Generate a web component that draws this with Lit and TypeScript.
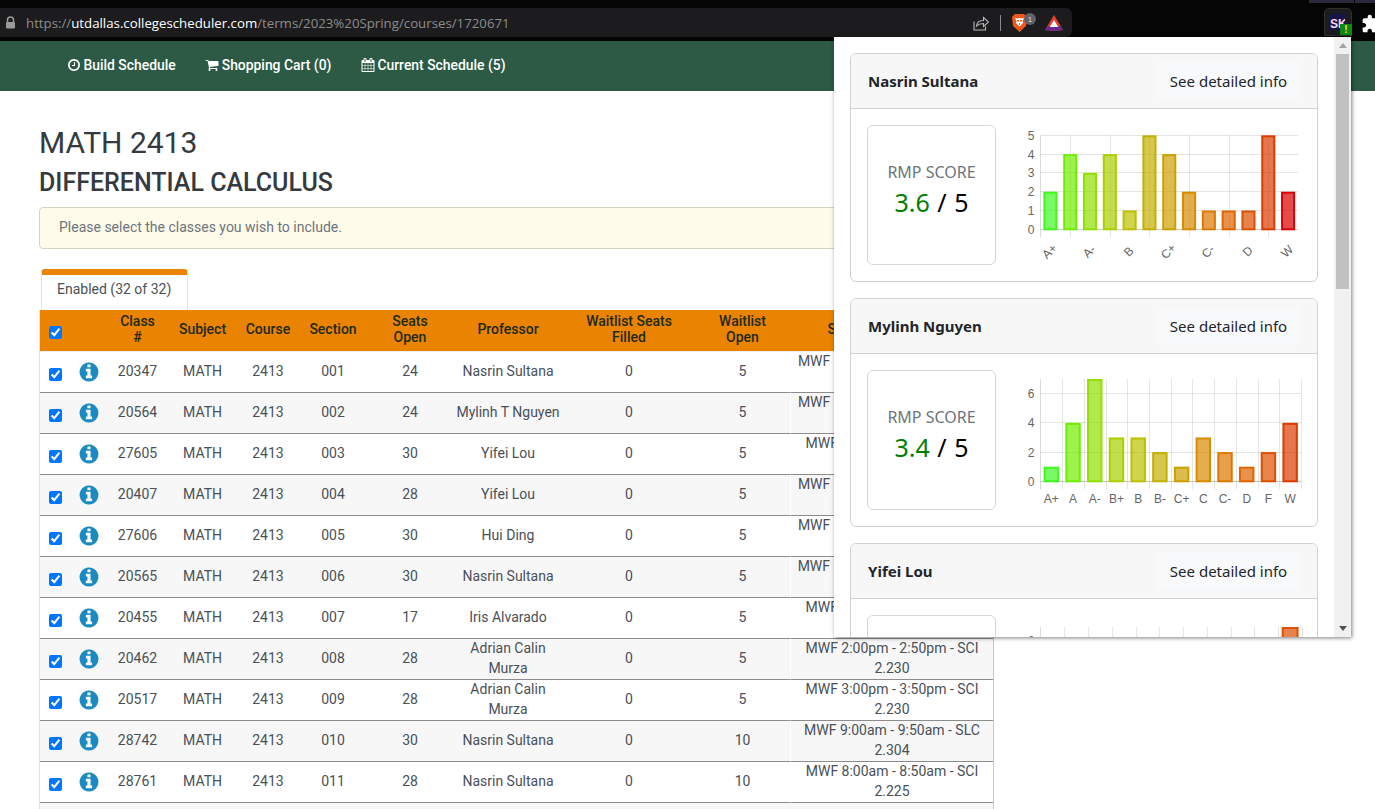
import { LitElement, html, css, svg } from "lit";
import { customElement } from "lit/decorators.js";

const CLOCK = "M1024 544v448q0 14-9 23t-23 9h-320q-14 0-23-9t-9-23v-64q0-14 9-23t23-9h224v-352q0-14 9-23t23-9h64q14 0 23 9t9 23zm416 352q0-148-73-273t-198-198-273-73-273 73-198 198-73 273 73 273 198 198 273 73 273-73 198-198 73-273zm224 0q0 209-103 385.5t-279.5 279.5-385.5 103-385.5-103-279.5-279.5-103-385.5 103-385.5 279.5-279.5 385.5-103 385.5 103 279.5 279.5 103 385.5z";
const CART = "M704 1536q0 52-38 90t-90 38-90-38-38-90 38-90 90-38 90 38 38 90zm896 0q0 52-38 90t-90 38-90-38-38-90 38-90 90-38 90 38 38 90zm128-1088v512q0 24-16.5 42.5t-40.5 21.5l-1044 122q13 60 13 70 0 16-24 64h920q26 0 45 19t19 45-19 45-45 19h-1024q-26 0-45-19t-19-45q0-11 8-31.5t16-36 21.5-40 15.5-29.5l-177-823h-204q-26 0-45-19t-19-45 19-45 45-19h256q16 0 28.5 6.5t19.5 15.5 13 24.5 8 26 5.5 29.5 4.5 26h1201q26 0 45 19t19 45z";
const CAL = "M192 1664h288v-288h-288v288zm352 0h320v-288h-320v288zm-352-352h288v-320h-288v320zm352 0h320v-320h-320v320zm-352-384h288v-288h-288v288zm736 736h320v-288h-320v288zm-384-736h320v-288h-320v288zm768 736h288v-288h-288v288zm-384-352h320v-320h-320v320zm-352-864v-288q0-13-9.5-22.5t-22.5-9.5h-64q-13 0-22.5 9.5t-9.5 22.5v288q0 13 9.5 22.5t22.5 9.5h64q13 0 22.5-9.5t9.5-22.5zm736 864h288v-320h-288v320zm-384-384h320v-288h-320v288zm384 0h288v-288h-288v288zm32-480v-288q0-13-9.5-22.5t-22.5-9.5h-64q-13 0-22.5 9.5t-9.5 22.5v288q0 13 9.5 22.5t22.5 9.5h64q13 0 22.5-9.5t9.5-22.5zm384-64v1280q0 52-38 90t-90 38h-1408q-52 0-90-38t-38-90v-1280q0-52 38-90t90-38h128v-96q0-66 47-113t113-47h64q66 0 113 47t47 113v96h384v-96q0-66 47-113t113-47h64q66 0 113 47t47 113v96h128q52 0 90 38t38 90z";
const INFO = "M1152 1376v-160q0-14-9-23t-23-9h-96v-512q0-14-9-23t-23-9h-320q-14 0-23 9t-9 23v160q0 14 9 23t23 9h96v320h-96q-14 0-23 9t-9 23v160q0 14 9 23t23 9h448q14 0 23-9t9-23zm-128-896v-160q0-14-9-23t-23-9h-192q-14 0-23 9t-9 23v160q0 14 9 23t23 9h192q14 0 23-9t9-23zm640 416q0 209-103 385.5t-279.5 279.5-385.5 103-385.5-103-279.5-279.5-103-385.5 103-385.5 279.5-279.5 385.5-103 385.5 103 279.5 279.5 103 385.5z";

const fa = (d: string, cls = "fa") => html`<svg class=${cls} viewBox="0 0 1792 1792" fill="currentColor"><path d=${d}></path></svg>`;

type Row = [string, string, string, string, string, string, string];
const ROWS: Row[] = [
  ["20347", "001", "24", "Nasrin Sultana", "5", "MWF 10:00am - 10:50am - SCI", "2.230"],
  ["20564", "002", "24", "Mylinh T Nguyen", "5", "MWF 11:00am - 11:50am - SCI", "2.230"],
  ["27605", "003", "30", "Yifei Lou", "5", "MWF 1:00pm - 1:50pm - SCI", "2.230"],
  ["20407", "004", "28", "Yifei Lou", "5", "MWF 10:00am - 10:50am - SCI", "2.225"],
  ["27606", "005", "30", "Hui Ding", "5", "MWF 11:00am - 11:50am - SCI", "2.225"],
  ["20565", "006", "30", "Nasrin Sultana", "5", "MWF 12:00pm - 12:50pm - SCI", "2.230"],
  ["20455", "007", "17", "Iris Alvarado", "5", "MWF 1:00pm - 1:50pm - SCI", "2.225"],
  ["20462", "008", "28", "Adrian Calin Murza", "5", "MWF 2:00pm - 2:50pm - SCI", "2.230"],
  ["20517", "009", "28", "Adrian Calin Murza", "5", "MWF 3:00pm - 3:50pm - SCI", "2.230"],
  ["28742", "010", "30", "Nasrin Sultana", "10", "MWF 9:00am - 9:50am - SLC", "2.304"],
  ["28761", "011", "28", "Nasrin Sultana", "10", "MWF 8:00am - 8:50am - SCI", "2.225"],
];

const COLORS13 = ["#40f820", "#70ee00", "#90e000", "#aad000", "#bcc000", "#c4b000", "#cca000", "#d88c00", "#e07800", "#e06400", "#dc5000", "#dc3c00", "#d80000"];

interface Chart {
  labels: string[];
  values: number[];
  max: number;
  ticks: number[];
  top: number;
  bottom: number;
  right: number;
  rotated?: boolean;
  sparse?: boolean;
}

interface Prof { name: string; score: string; chart: Chart }

const PROFS: Prof[] = [
  {
    name: "Nasrin Sultana", score: "3.6",
    chart: {
      labels: ["A+", "A", "A-", "B+", "B", "B-", "C+", "C", "C-", "D+", "D", "F", "W"],
      values: [2, 4, 3, 4, 1, 5, 4, 2, 1, 1, 1, 5, 2],
      max: 5, ticks: [0, 1, 2, 3, 4, 5], top: 19.3, bottom: 113.3, right: 288, rotated: true, sparse: true,
    },
  },
  {
    name: "Mylinh Nguyen", score: "3.4",
    chart: {
      labels: ["A+", "A", "A-", "B+", "B", "B-", "C+", "C", "C-", "D", "F", "W"],
      values: [1, 4, 7, 3, 3, 2, 1, 3, 2, 1, 2, 4],
      max: 7, ticks: [0, 2, 4, 6], top: 18, bottom: 120.3, right: 291,
    },
  },
  {
    name: "Yifei Lou", score: "3.5",
    chart: {
      labels: ["A+", "A", "A-", "B+", "B", "B-", "C+", "C", "C-", "D", "W"],
      values: [2, 3, 4, 3, 2, 5, 2, 3, 1, 2, 7],
      max: 7, ticks: [0, 2, 4, 6], top: 21, bottom: 115.5, right: 292,
    },
  },
];

function renderChart(c: Chart) {
  const left = 30.5;
  const n = c.values.length;
  const step = (c.right - left) / n;
  const unit = (c.bottom - c.top) / c.max;
  const barW = step * 0.71;
  const gridXs: number[] = [];
  if (c.sparse) {
    for (let i = 1; i < n; i += 2) gridXs.push(left + step * (i + 0.5));
  } else {
    for (let i = 1; i <= n; i++) gridXs.push(left + step * i);
  }
  return html`<svg class="chart" width="300" height="156" viewBox="0 0 300 156">
    ${c.ticks.map((t) => {
      const y = Math.floor(c.bottom - t * unit) + 0.5;
      return svg`<line x1=${left} x2=${c.right} y1=${y} y2=${y} stroke=${t === 0 ? "rgba(0,0,0,.22)" : "rgba(0,0,0,.1)"}></line>
        <text class="tick" x=${left - 6} y=${y + 4} text-anchor="end">${t}</text>`;
    })}
    <line x1=${left} x2=${left} y1=${c.top} y2=${c.bottom + 8} stroke="rgba(0,0,0,.14)"></line>
    ${gridXs.map((x) => {
      const rx = Math.round(x) + 0.5;
      return svg`<line x1=${rx} x2=${rx} y1=${c.top} y2=${c.bottom + 8} stroke="rgba(0,0,0,.1)"></line>`;
    })}
    ${c.values.map((v, i) => {
      const x = left + step * (i + 0.5) - barW / 2;
      const y = c.bottom - v * unit;
      return svg`<rect x=${x + 1} y=${y + 1} width=${barW - 2} height=${v * unit - 1} fill=${COLORS13[i]} fill-opacity=".7" stroke=${COLORS13[i]} stroke-width="2"></rect>`;
    })}
    ${c.labels.map((l, i) => {
      const x = left + step * (i + 0.5);
      if (c.rotated) {
        if (i % 2) return "";
        return svg`<text class="tick" transform="translate(${x + 2} ${c.bottom + 25}) rotate(-45)" text-anchor="middle">${l}</text>`;
      }
      return svg`<text class="tick" x=${x} y=${c.bottom + 22} text-anchor="middle">${l}</text>`;
    })}
  </svg>`;
}

@customElement("app-root")
export class AppRoot extends LitElement {
  static styles = css`
    :host { display: block; position: relative; height: 809px; overflow: hidden; background: #fff; font-family: Roboto, "Liberation Sans", sans-serif; font-size: 14px; color: #495057; }
    * { box-sizing: border-box; }
    .browser { height: 41px; background: #050505; display: flex; align-items: flex-start; padding-top: 8px; position: relative; }
    .browser::before { content: ""; position: absolute; right: 0; top: 0; width: 66px; height: 3px; background: linear-gradient(90deg, #2a2a3c 45px, #050505 45px, #050505 46px, #2a2a3c 46px); }
    .addr { width: 1072px; flex: none; height: 29px; background: #1c1c1e; border-radius: 0 6px 6px 0; display: flex; align-items: center; padding-left: 5px; }
    .lock { width: 11px; height: 13px; margin-right: 10px; }
    .url { font-family: "Open Sans", sans-serif; font-size: 13.25px; color: #8c8c8c; white-space: nowrap; }
    .url b { color: #fff; font-weight: 400; }
    .addr-icons { margin-left: auto; display: flex; align-items: center; margin-top: 1px; }
    .share { width: 16px; height: 16px; margin-right: 0; }
    .sep { width: 1px; height: 16px; background: #8a8a8a; margin: 0 11px 0 11px; }
    .brave { width: 15px; height: 18px; }
    .badge { width: 12px; height: 12px; border-radius: 50%; background: #5f6068; color: #ddd; font-size: 8px; font-family: "Liberation Sans", sans-serif; display: flex; align-items: center; justify-content: center; margin: -8px 0 0 -3px; }
    .tri { width: 18px; height: 16px; margin: 0 9px 0 9px; }
    .ext { width: 28px; height: 28px; flex: none; margin-left: 252px; margin-right: 9px; background: #1c1c1e; border: 1px solid #303030; border-radius: 5px 5px 0 0; display: flex; padding: 5px 0 0 5px; }
    .sk { width: 15px; height: 16px; background: #15154a; color: #ffd8e8; font-family: "Liberation Sans", sans-serif; font-weight: 700; font-size: 12px; line-height: 20px; text-align: left; overflow: hidden; flex: none; }
    .warn { width: 12px; height: 11px; background: #0b8a16; color: #ffe24a; font: 700 10px/11px "Liberation Sans", sans-serif; text-align: center; margin: 10px 0 0 -5px; flex: none; }
    .puzzle { width: 20px; height: 20px; flex: none; margin-top: 6px; color: #fff; }
    .nav { height: 50px; background: #2c5a45; display: flex; align-items: center; padding: 0 0 2px 67px; color: #fff; font-weight: 500; font-size: 13.9px; gap: 29.5px; }
    .nav-item { display: flex; align-items: center; gap: 2.5px; white-space: nowrap; }
    .fa { width: 14px; height: 14px; flex: none; }
    main { padding: 34px 0 0 39px; width: 994px; }
    h1 { margin: 0; font-size: 30px; line-height: 36px; font-weight: 400; color: #343a40; }
    h2 { margin: 7px 0 0; font-size: 25px; line-height: 30px; font-weight: 500; color: #343a40; }
    .alert { margin-top: 9px; height: 42px; background: #fffbea; border: 1px solid #d9d4bd; border-radius: 4px; padding: 0 19px 2px; display: flex; align-items: center; color: #6c757d; }
    .tab { margin: 20px 0 0 2px; width: 147px; height: 41px; border: 1px solid #dee2e6; border-top: 6px solid #e98300; border-bottom: 0; border-radius: 4px 4px 0 0; padding: 0 0 8px 15px; display: flex; align-items: center; background: #fff; }
    table { border-collapse: separate; border-spacing: 0; table-layout: fixed; width: 955px; border-left: 1px solid #dee2e6; border-right: 1px solid #c8c8c8; }
    th { background: #e98300; color: #1d2a1d; font-weight: 500; line-height: 16px; height: 42px; padding: 0 2px 3px; text-align: center; vertical-align: middle; border-bottom: 1px solid #eee; }
    td { height: 41px; padding: 0 2px; text-align: center; vertical-align: middle; line-height: 20px; border-bottom: 1px solid #8c8c8c; }
    tr:nth-child(even) td { background: #f7f7f7; }
    td.sched { border-left: 1px solid #fff; padding: 0 6px; }
    .cell { margin-top: -2px; }
    input { margin: 6px 0 0; width: 13px; height: 13px; display: inline-block; vertical-align: top; }
    th input { margin-top: 7px; }
    .info { width: 22px; height: 22px; color: #1a8ac0; display: block; margin: 0 auto; }
    .popup { position: absolute; left: 834px; top: 37px; width: 517px; height: 600px; background: #fff; display: flex; box-shadow: 1px 1px 4px rgba(0,0,0,.5); font-family: "Noto Sans", sans-serif; color: #212529; }
    .cards { flex: 1; min-width: 0; overflow: hidden; padding: 16px 16px 0; display: flex; flex-direction: column; gap: 16px; }
    .card { flex: none; height: 229px; border: 1px solid #d2d2d2; border-radius: 6px; overflow: hidden; }
    .card-h { height: 55px; background: #f7f7f7; border-bottom: 1px solid #d2d2d2; display: flex; align-items: center; justify-content: space-between; padding: 0 17px 0 17px; }
    .name { font-weight: 700; font-size: 15px; }
    .btn { width: 143px; height: 38px; background: #f8f9fa; border-radius: 5px; font-size: 15px; display: flex; align-items: center; justify-content: center; }
    .card-b { height: 172px; display: flex; align-items: center; padding-left: 16px; }
    .score { width: 129px; height: 140px; border: 1px solid #d6d6d6; border-radius: 6px; display: flex; flex-direction: column; align-items: center; justify-content: center; flex: none; padding-bottom: 10px; }
    .score-l { font-size: 16px; line-height: 22px; color: #6c757d; }
    .score-v { font-size: 25px; line-height: 34px; margin-top: 2px; color: #000; word-spacing: 1px; }
    .score-v span { color: #008000; }
    .chart { flex: none; margin: -2px 0 0 14px; display: block; }
    .tick { font: 12px "Liberation Sans", sans-serif; fill: #666; }
    .sb { width: 17px; flex: none; background: #f1f1f1; display: flex; flex-direction: column; align-items: center; }
    .arrow { height: 17px; flex: none; display: flex; align-items: center; justify-content: center; }
    .up { width: 0; height: 0; border: 4px solid transparent; border-top: 0; border-bottom: 5px solid #a3a3a3; }
    .down { width: 0; height: 0; border: 4px solid transparent; border-bottom: 0; border-top: 5px solid #505050; }
    .thumb { width: 13px; height: 235px; background: #c1c1c1; }
    .track { flex: 1; }
  `;

  render() {
    const c = (t: string) => html`<div class="cell">${t}</div>`;
    return html`
      <div class="browser">
        <div class="addr">
          <svg class="lock" viewBox="0 0 11 13"><path d="M2.500 6V4a3 3 0 0 1 6 0v2" fill="none" stroke="#9a9a9a" stroke-width="1.5"></path><rect x="1" y="6" width="9" height="6.5" rx="1" fill="#9a9a9a"></rect></svg>
          <span class="url">https://<b>utdallas.collegescheduler.com</b>/terms/2023%20Spring/courses/1720671</span>
          <div class="addr-icons">
            <svg class="share" viewBox="0 0 16 16" fill="none" stroke="#b8b8b8" stroke-width="1.1"><path d="M1 6.500v8.500h11.500v-3.500"></path><path d="M3.500 11c.5-3.500 3-5.500 7-5.500V2.500l5 4.500-5 4.500V8.500c-3 0-5 .5-7 2.500z"></path></svg>
            <div class="sep"></div>
            <svg class="brave" viewBox="0 0 15 18"><path d="M3 0h9l3 3-1 9-6.500 6L1 12 0 3z" fill="#f1561f"></path><path d="M3 4l3 .5 1.500-.7 1.500.7 3-.5-1.500 3 .5 2-3.500 3.500L4 9l.5-2z" fill="#fff"></path><path d="M5 6h2v1.500H5zM8 6h2v1.500H8zM7 9h1v2H7z" fill="#f1561f"></path></svg>
            <div class="badge">1</div>
            <svg class="tri" viewBox="0 0 18 16"><path d="M9 0l9 15-9 1-9-1z" fill="#e8402a"></path><path d="M2.200 11.300h13.600L18 15l-9 1-9-1z" fill="#6b2a8c"></path><path d="M9 5l4.200 7H4.800z" fill="#fff"></path></svg>
          </div>
        </div>
        <div class="ext"><div class="sk">SK</div><div class="warn">!</div></div>
        <svg class="puzzle" viewBox="0 0 24 24" fill="currentColor"><path d="M20.500 11H19V7c0-1.100-.9-2-2-2h-4V3.500C13 2.120 11.880 1 10.500 1S8 2.120 8 3.500V5H4c-1.100 0-1.990.9-1.990 2v3.800H3.500c1.490 0 2.700 1.210 2.700 2.700s-1.210 2.700-2.700 2.700H2V20c0 1.100.9 2 2 2h3.800v-1.500c0-1.490 1.210-2.700 2.700-2.700 1.490 0 2.700 1.210 2.700 2.700V22H17c1.100 0 2-.9 2-2v-4h1.500c1.380 0 2.500-1.120 2.500-2.500S21.880 11 20.500 11z"></path></svg>
      </div>
      <nav class="nav">
        <div class="nav-item">${fa(CLOCK)}Build Schedule</div>
        <div class="nav-item">${fa(CART)}Shopping Cart (0)</div>
        <div class="nav-item">${fa(CAL)}Current Schedule (5)</div>
      </nav>
      <main>
        <h1>MATH 2413</h1>
        <h2>DIFFERENTIAL CALCULUS</h2>
        <div class="alert">Please select the classes you wish to include.</div>
        <div class="tab">Enabled (32 of 32)</div>
        <table>
          <colgroup>
            <col style="width:31px" /><col style="width:36px" /><col style="width:61px" /><col style="width:69px" /><col style="width:62px" /><col style="width:68px" /><col style="width:86px" /><col style="width:110px" /><col style="width:132px" /><col style="width:95px" /><col />
          </colgroup>
          <thead>
            <tr>
              <th><input type="checkbox" checked /></th>
              <th></th>
              <th>Class<br />#</th>
              <th>Subject</th>
              <th>Course</th>
              <th>Section</th>
              <th>Seats<br />Open</th>
              <th>Professor</th>
              <th>Waitlist Seats<br />Filled</th>
              <th>Waitlist<br />Open</th>
              <th>Schedule &amp; Location</th>
            </tr>
          </thead>
          <tbody>
            ${ROWS.map((r) => html`
              <tr>
                <td><input type="checkbox" checked /></td>
                <td>${fa(INFO, "info")}</td>
                <td>${c(r[0])}</td>
                <td>${c("MATH")}</td>
                <td>${c("2413")}</td>
                <td>${c(r[1])}</td>
                <td>${c(r[2])}</td>
                <td>${c(r[3])}</td>
                <td>${c("0")}</td>
                <td>${c(r[4])}</td>
                <td class="sched"><div class="cell">${r[5]}<br />${r[6]}</div></td>
              </tr>`)}
            <tr>${Array.from({ length: 11 }, () => html`<td></td>`)}</tr>
          </tbody>
        </table>
      </main>
      <aside class="popup">
        <div class="cards">
          ${PROFS.map((p) => html`
            <section class="card">
              <div class="card-h"><span class="name">${p.name}</span><div class="btn">See detailed info</div></div>
              <div class="card-b">
                <div class="score">
                  <div class="score-l">RMP SCORE</div>
                  <div class="score-v"><span>${p.score}</span> / 5</div>
                </div>
                ${renderChart(p.chart)}
              </div>
            </section>`)}
        </div>
        <div class="sb">
          <div class="arrow"><div class="up"></div></div>
          <div class="thumb"></div>
          <div class="track"></div>
          <div class="arrow"><div class="down"></div></div>
        </div>
      </aside>
    `;
  }
}
